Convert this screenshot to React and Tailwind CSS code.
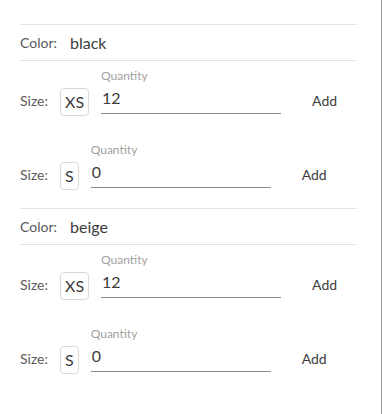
import React from "react";

const rows = [
  { color: "black", sizes: [{ s: "XS", q: "12" }, { s: "S", q: "0" }] },
  { color: "beige", sizes: [{ s: "XS", q: "12" }, { s: "S", q: "0" }] },
];

function SizeRow({ s, q, first }) {
  return (
    <div className={`flex items-end ${first ? "pt-[8px]" : "pt-[27px]"}`}>
      <span className="w-10 mb-[5px] text-[14px] leading-5 text-[#5a5a5a]">Size:</span>
      <span className="h-7 border border-[#d9d9d9] rounded-[4px] px-[4px] text-[16px] leading-[26px] text-[#3c3c3c]">
        {s}
      </span>
      <div className="ml-3 w-[180px] mb-[2px] flex flex-col">
        <span className="text-[12px] leading-[14px] text-[#a0a0a0]">Quantity</span>
        <input
          readOnly
          value={q}
          className="mt-[3px] h-7 pl-[1px] pb-[4px] border-b border-[#8a8a8a] text-[16px] text-[#3c3c3c] outline-none bg-transparent"
        />
      </div>
      <button className="ml-[31px] mb-[5px] text-[14px] leading-5 text-[#3c3c3c]">Add</button>
    </div>
  );
}

export default function App() {
  return (
    <div
      className="w-[382px] h-[414px] bg-white border-r border-[#9a9a9a] px-5 pt-6"
      style={{ fontFamily: "Lato, 'Open Sans', sans-serif" }}
    >
      <div className="w-[337px]">
        {rows.map((r, i) => (
          <div key={r.color} className={i > 0 ? "mt-[18px]" : ""}>
            <div className="h-px bg-[#e2e2e2]" />
            <div className="h-[35px] flex items-center">
              <span className="w-[50px] text-[14px] text-[#5a5a5a]">Color:</span>
              <span className="text-[16px] text-[#3c3c3c]">{r.color}</span>
            </div>
            <div className="h-px bg-[#e2e2e2]" />
            {r.sizes.map((z, j) => (
              <SizeRow key={z.s} s={z.s} q={z.q} first={j === 0} />
            ))}
          </div>
        ))}
      </div>
    </div>
  );
}
